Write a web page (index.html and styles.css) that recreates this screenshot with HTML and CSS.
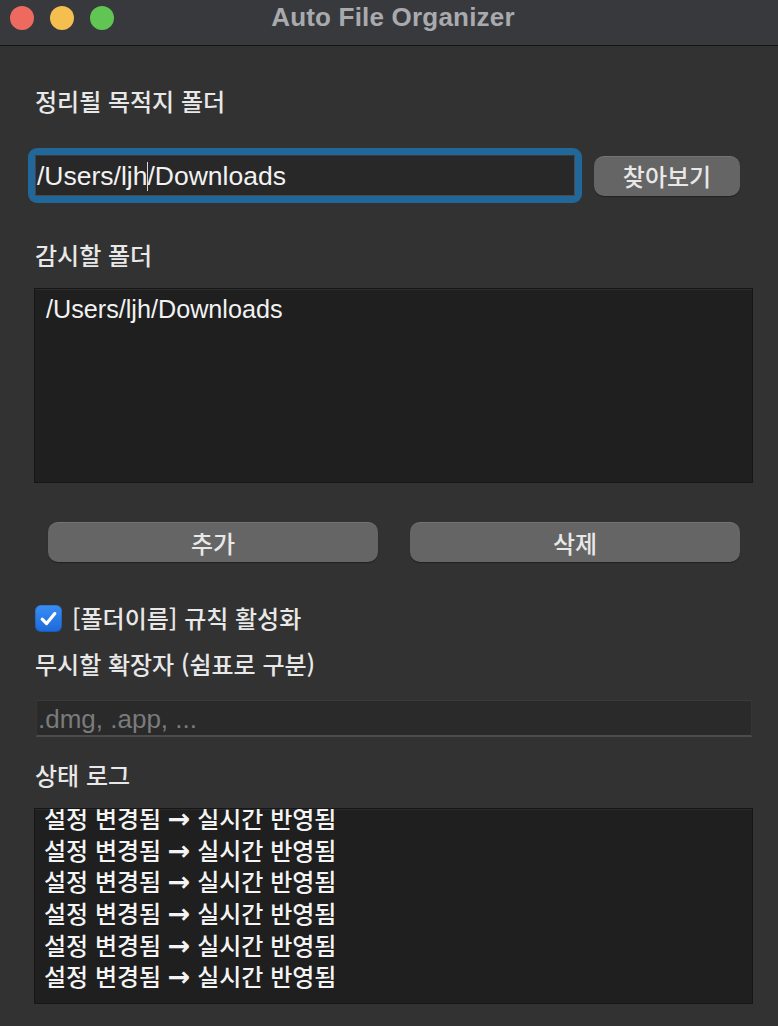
FILE: index.html
```html
<!DOCTYPE html>
<html lang="ko">
<head>
<meta charset="utf-8">
<title>Auto File Organizer</title>
<link rel="stylesheet" href="styles.css">
</head>
<body>
<div class="window">
  <header class="titlebar">
    <div class="lights">
      <span class="light red"></span>
      <span class="light yellow"></span>
      <span class="light green"></span>
    </div>
    <div class="title">Auto File Organizer</div>
    <div></div>
  </header>

  <main class="content">
    <div class="label label-dest">정리될 목적지 폴더</div>

    <div class="dest-row">
      <div class="focus-ring">
        <div class="field"><span>/Users/ljh</span><span class="caret"></span><span>/Downloads</span></div>
      </div>
      <button class="btn btn-browse">찾아보기</button>
    </div>

    <div class="label label-watch">감시할 폴더</div>

    <div class="listbox">
      <div class="list-item">/Users/ljh/Downloads</div>
    </div>

    <div class="btn-row">
      <button class="btn btn-wide">추가</button>
      <button class="btn btn-wide">삭제</button>
    </div>

    <label class="check-row">
      <span class="checkbox">
        <svg viewBox="0 0 27 27" width="27" height="27"><path d="M7.2 14.2 L11.6 18.6 L19.8 8.6" fill="none" stroke="#ffffff" stroke-width="3.2" stroke-linecap="round" stroke-linejoin="round"/></svg>
      </span>
      <span class="check-text">[폴더이름] 규칙 활성화</span>
    </label>

    <div class="label label-ignore">무시할 확장자 (쉼표로 구분)</div>

    <div class="entry"><span class="placeholder">.dmg, .app, ...</span></div>

    <div class="label label-log">상태 로그</div>

    <div class="logbox">
      <div class="log-line">설정 변경됨 <span class="arrow">→</span> 실시간 반영됨</div>
      <div class="log-line">설정 변경됨 <span class="arrow">→</span> 실시간 반영됨</div>
      <div class="log-line">설정 변경됨 <span class="arrow">→</span> 실시간 반영됨</div>
      <div class="log-line">설정 변경됨 <span class="arrow">→</span> 실시간 반영됨</div>
      <div class="log-line">설정 변경됨 <span class="arrow">→</span> 실시간 반영됨</div>
      <div class="log-line">설정 변경됨 <span class="arrow">→</span> 실시간 반영됨</div>
    </div>
  </main>
</div>
</body>
</html>
```

FILE: styles.css
```css
* { box-sizing: border-box; }

html, body {
  margin: 0;
  padding: 0;
  background: #323232;
  width: 778px;
  height: 1026px;
  overflow: hidden;
}

.window {
  width: 778px;
  height: 1026px;
  background: #323232;
  font-family: "Liberation Sans", "Noto Sans CJK KR", sans-serif;
}

.titlebar {
  height: 46px;
  background: #38393d;
  border-bottom: 1px solid #141414;
  display: grid;
  grid-template-columns: 1fr auto 1fr;
  align-items: start;
}

.lights {
  display: flex;
  gap: 16px;
  padding: 6px 0 0 10px;
}

.light {
  width: 24px;
  height: 24px;
  border-radius: 50%;
  display: block;
}
.red { background: #ee6a5f; }
.yellow { background: #f5bf4f; }
.green { background: #61c554; }

.title {
  font-family: "Liberation Sans", sans-serif;
  font-weight: bold;
  font-size: 26px;
  line-height: 35px;
  color: #a9aaae;
  padding-left: 8px;
  letter-spacing: 0.2px;
}

.content {
  padding: 0 25px 0 34px;
  display: flex;
  flex-direction: column;
}

.label {
  font-family: "Noto Sans CJK KR", sans-serif;
  font-weight: 500;
  font-size: 24px;
  line-height: 30px;
  color: #e8e8e8;
  padding-left: 1px;
}

.label-dest { margin-top: 40px; }
.label-watch { margin-top: 37px; }
.label-ignore { margin-top: 16px; }
.label-log { margin-top: 23px; }

.dest-row {
  margin-top: 32px;
  margin-left: -6px;
  display: flex;
  align-items: center;
  gap: 12px;
}

.focus-ring {
  width: 554px;
  height: 55px;
  padding: 7px;
  background: #22679a;
  border-radius: 9px;
}

.field {
  height: 41px;
  background: #282828;
  border: 1px solid #4a4a4a;
  border-top-color: #3a3a3a;
  border-left-color: #444;
  padding: 2px 0 0 1px;
  font-family: "Liberation Sans", sans-serif;
  font-size: 26.5px;
  line-height: 37px;
  color: #f2f2f2;
  white-space: nowrap;
  overflow: hidden;
}

.caret {
  display: inline-block;
  width: 0;
  height: 29px;
  border-left: 1px solid #d8d8d8;
  margin-right: -1px;
  vertical-align: -6px;
}

.btn {
  font-family: "Noto Sans CJK KR", sans-serif;
  font-weight: 500;
  font-size: 24px;
  color: #e8e8e8;
  background: #656565;
  border: none;
  border-top: 1px solid #747474;
  border-radius: 10px;
  box-shadow: 0 1px 1px rgba(0, 0, 0, 0.35);
  height: 40px;
  padding: 0;
  line-height: 38px;
  text-align: center;
}

.btn-browse {
  width: 146px;
}

.listbox {
  margin-top: 18px;
  height: 195px;
  background: #1f1f1f;
  border: 1px solid #161616;
  box-shadow: inset 0 1px 0 #2c2c2c;
  padding: 5px 0 0 11px;
}

.list-item {
  font-family: "Liberation Sans", sans-serif;
  font-size: 25.2px;
  line-height: 30px;
  color: #f2f2f2;
}

.btn-row {
  margin: 39px 13px 0 14px;
  display: flex;
  gap: 32px;
}

.btn-wide {
  flex: 1;
}

.check-row {
  margin-top: 41px;
  margin-left: 1px;
  height: 30px;
  display: flex;
  align-items: center;
  gap: 10px;
}

.checkbox {
  width: 27px;
  height: 27px;
  border-radius: 6px;
  background: linear-gradient(#3a8ef6, #1c69d7);
  box-shadow: inset 0 0 0 1px rgba(0, 0, 0, 0.15);
  display: block;
}

.checkbox svg { display: block; }

.check-text {
  font-family: "Noto Sans CJK KR", sans-serif;
  font-weight: 500;
  font-size: 24px;
  line-height: 30px;
  color: #e8e8e8;
}

.entry {
  margin: 21px 1px 0 2px;
  height: 37px;
  background: #2a2a2a;
  border-top: 1px solid #3a3a3a;
  border-left: 1px solid #353535;
  border-right: 1px solid #353535;
  border-bottom: 2px solid #4c4c4c;
  padding: 2px 0 0 1px;
  font-family: "Liberation Sans", sans-serif;
  font-size: 26px;
  line-height: 32px;
  white-space: nowrap;
}

.placeholder { color: #7b7b7b; }

.logbox {
  margin-top: 18px;
  height: 196px;
  background: #1f1f1f;
  border: 1px solid #161616;
  box-shadow: inset 0 1px 0 #2a2a2a;
  padding: 0 0 11px 9px;
  display: flex;
  flex-direction: column;
  justify-content: flex-end;
  overflow: hidden;
}

.log-line {
  flex: none;
  height: 31.7px;
  font-family: "Noto Sans CJK KR", sans-serif;
  font-weight: 500;
  font-size: 24px;
  line-height: 31.7px;
  color: #f4f4f4;
  white-space: nowrap;
}

.arrow {
  font-family: "DejaVu Sans", sans-serif;
  font-weight: bold;
  font-size: 27px;
  line-height: 0;
}
```
